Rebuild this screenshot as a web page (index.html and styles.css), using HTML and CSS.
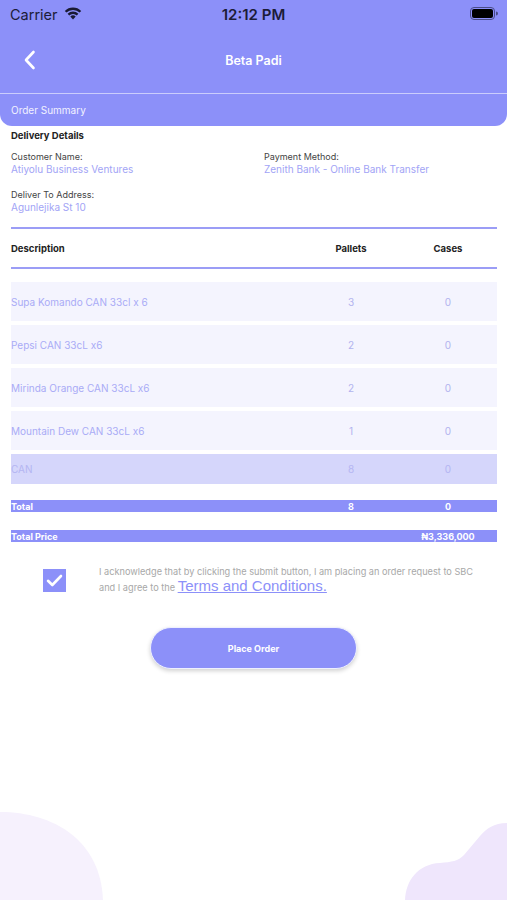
FILE: index.html
```html
<!DOCTYPE html>
<html>
<head>
<meta charset="utf-8">
<link rel="stylesheet" href="styles.css">
</head>
<body>
<div class="page">
  <header class="header">
    <div class="status">
      <div class="status-left">
        <span class="carrier">Carrier</span>
        <svg class="wifi" width="18" height="13" viewBox="0 0 18 13"><path d="M9 12.6 L6.3 9.6 A3.9 3.9 0 0 1 11.7 9.6 Z" fill="#1a1a33"/><path d="M3.6 6.8 A7.6 7.6 0 0 1 14.4 6.8 L12.8 8.5 A5.4 5.4 0 0 0 5.2 8.5 Z" fill="#1a1a33"/><path d="M0.8 3.9 A11.6 11.6 0 0 1 17.2 3.9 L15.6 5.6 A9.4 9.4 0 0 0 2.4 5.6 Z" fill="#1a1a33"/></svg>
      </div>
      <span class="time">12:12 PM</span>
      <div class="status-right">
        <svg width="28" height="13" viewBox="0 0 28 13"><rect x="0.5" y="0.5" width="24" height="12" rx="3.5" fill="none" stroke="#4a4c88" stroke-width="1"/><rect x="2" y="2" width="21" height="9" rx="2" fill="#000"/><path d="M26 4.5 a1.8 1.8 0 0 1 0 4 z" fill="#4a4c88"/></svg>
      </div>
    </div>
    <div class="navbar">
      <svg class="back" width="14" height="20" viewBox="0 0 14 20"><path d="M10.5 2 L3 10 L10.5 18" fill="none" stroke="#fff" stroke-width="2.6" stroke-linecap="round" stroke-linejoin="round"/></svg>
      <span class="title">Beta Padi</span>
    </div>
    <div class="subbar">Order Summary</div>
  </header>

  <main class="content">
    <div class="section-title">Delivery Details</div>
    <div class="details">
      <div class="field">
        <div class="label">Customer Name:</div>
        <div class="value">Atiyolu Business Ventures</div>
      </div>
      <div class="field">
        <div class="label">Payment Method:</div>
        <div class="value">Zenith Bank - Online Bank Transfer</div>
      </div>
      <div class="field">
        <div class="label">Deliver To Address:</div>
        <div class="value">Agunlejika St 10</div>
      </div>
    </div>

    <div class="thead">
      <span>Description</span>
      <span class="c">Pallets</span>
      <span class="c">Cases</span>
    </div>

    <div class="rows">
      <div class="row"><span>Supa Komando CAN 33cl x 6</span><span class="c">3</span><span class="c">0</span></div>
      <div class="row"><span>Pepsi CAN 33cL x6</span><span class="c">2</span><span class="c">0</span></div>
      <div class="row"><span>Mirinda Orange CAN 33cL x6</span><span class="c">2</span><span class="c">0</span></div>
      <div class="row"><span>Mountain Dew CAN 33cL x6</span><span class="c">1</span><span class="c">0</span></div>
      <div class="row group"><span>CAN</span><span class="c">8</span><span class="c">0</span></div>
    </div>

    <div class="bar total"><span>Total</span><span class="c">8</span><span class="c">0</span></div>
    <div class="bar price"><span>Total Price</span><span class="c"></span><span class="c">₦3,336,000</span></div>

    <div class="agree">
      <div class="checkbox">
        <svg width="17" height="13" viewBox="0 0 17 13"><path d="M2 6.8 L6.3 11 L15 2" fill="none" stroke="#fff" stroke-width="2.6" stroke-linecap="round" stroke-linejoin="round"/></svg>
      </div>
      <p class="agree-text">I acknowledge that by clicking the submit button, I am placing an order request to SBC<br>and I agree to the <a class="terms">Terms and Conditions.</a></p>
    </div>

    <div class="actions">
      <button class="place">Place Order</button>
    </div>
  </main>

  <svg class="blob blob-left" width="110" height="90" viewBox="0 812 110 90"><path d="M0 812 C55 812 102 842 103 902 L0 902 Z" fill="#f6f1fd"/></svg>
  <svg class="blob blob-right" width="104" height="80" viewBox="404 822 104 80"><path d="M405 902 C405 882 417 864 440 863 C452 862 458 861 464 855 L480 836 C487 828 494 823 508 823 L508 902 Z" fill="#efe6fc"/></svg>
</div>
</body>
</html>
```
FILE: styles.css
```css
* { box-sizing: border-box; }
html, body { margin: 0; padding: 0; background: #fff; }
body {
  font-family: Inter, "Noto Sans", "Liberation Sans", sans-serif;
  color: #333;
}
.page {
  position: relative;
  width: 507px;
  height: 900px;
  overflow: hidden;
}
.header {
  background: #8c90f9;
  border-radius: 0 0 12px 12px;
  color: #fff;
}
.status {
  height: 28px;
  display: flex;
  align-items: center;
  justify-content: space-between;
  padding: 0 9px 0 10px;
  position: relative;
}
.status-left { display: flex; align-items: center; gap: 6px; }
.carrier { font-size: 14.5px; color: #1c1c38; }
.wifi { margin-top: -2px; }
.time {
  position: absolute;
  left: 0; right: 0;
  text-align: center;
  font-size: 15px;
  font-weight: 600;
  color: #1c1c38;
  pointer-events: none;
}
.status-right { display: flex; align-items: center; margin-top: -1px; }
.navbar {
  height: 66px;
  display: flex;
  align-items: center;
  justify-content: center;
  position: relative;
  border-bottom: 1px solid rgba(255,255,255,0.55);
}
.back { position: absolute; left: 23px; top: 22px; }
.title { font-size: 12.5px; font-weight: 600; }
.subbar {
  height: 32px;
  display: flex;
  align-items: center;
  padding-left: 11px;
  font-size: 10px;
  color: #f2f2ff;
}
.content { padding: 0 10px 0 11px; }
.section-title {
  margin-top: 4px;
  font-size: 9.5px;
  font-weight: 700;
  line-height: 12px;
  color: #222;
}
.details {
  display: grid;
  grid-template-columns: 253px 1fr;
  row-gap: 14px;
  margin-top: 9px;
}
.label { font-size: 9px; line-height: 12px; color: #444; }
.value { font-size: 10px; line-height: 12px; color: #a2a4f6; }
.thead, .row, .bar {
  display: grid;
  grid-template-columns: 1fr 80px 80px;
  column-gap: 17px;
  padding-right: 9px;
  align-items: center;
}
.c { text-align: center; }
.thead {
  margin-top: 14px;
  height: 42px;
  border-top: 2px solid #9b9df6;
  border-bottom: 2px solid #9b9df6;
  font-size: 9.5px;
  font-weight: 700;
  color: #222;
}
.rows {
  margin-top: 13px;
  display: flex;
  flex-direction: column;
  gap: 4px;
}
.row {
  height: 39px;
  background: #f4f4fe;
  font-size: 10px;
  color: #a9abf6;
}
.row .c { color: #b2b3ee; }
.row.group { height: 30px; background: #d5d6fb; }
.row.group span { color: #b4b5f2; }
.bar {
  height: 12px;
  background: #8c90f9;
  color: #fff;
  font-size: 9px;
  font-weight: 700;
}
.total { margin-top: 16px; }
.price { margin-top: 18px; }
.agree {
  display: flex;
  align-items: flex-start;
  margin-top: 27px;
  padding-left: 32px;
  gap: 33px;
}
.checkbox {
  flex: none;
  width: 23px;
  height: 23px;
  background: #8c90f9;
  display: flex;
  align-items: center;
  justify-content: center;
}
.agree-text {
  margin: -4px 0 0;
  font-size: 9.2px;
  line-height: 14px;
  color: #a8a8a8;
  white-space: nowrap;
}
.terms {
  font-family: "Liberation Sans", Arial, sans-serif;
  font-size: 15px;
  line-height: 14px;
  color: #8c90f9;
  text-decoration: underline;
}
.actions {
  display: flex;
  justify-content: center;
  margin-top: 32px;
  padding-right: 1px;
}
.place {
  width: 207px;
  height: 42px;
  border-radius: 21px;
  border: 1.5px solid #eef0ff;
  background: #8c90f9;
  color: #fff;
  font-family: Inter, "Noto Sans", sans-serif;
  font-size: 9px;
  font-weight: 700;
  box-shadow: 0 2px 4px rgba(0,0,0,0.18);
}
.blob { position: absolute; bottom: -2px; }
.blob-left { left: 0; }
.blob-right { right: -1px; }
```
